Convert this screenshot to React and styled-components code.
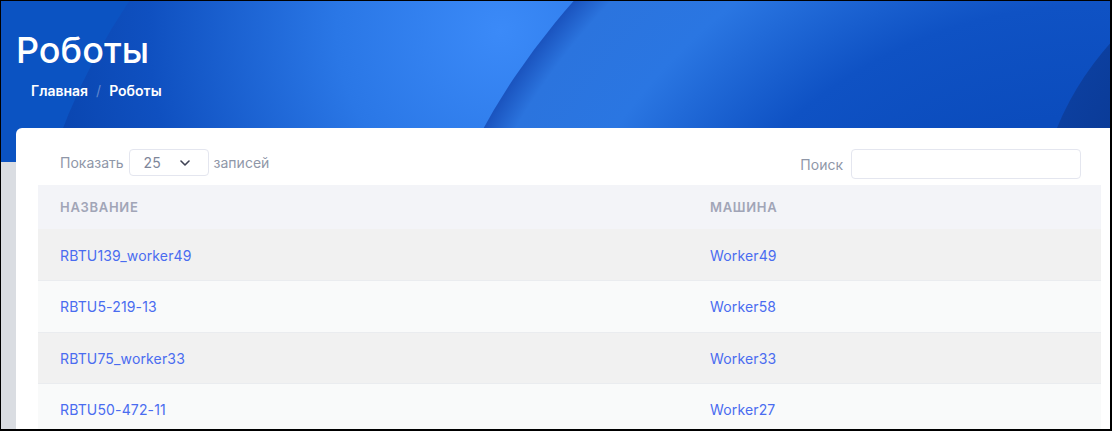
import React from 'react';
import styled, { createGlobalStyle } from 'styled-components';

const GlobalStyle = createGlobalStyle`
  html, body {
    margin: 0;
    padding: 0;
    background: #ffffff;
  }
  body {
    font-family: Inter, "Noto Sans", sans-serif;
    -webkit-font-smoothing: antialiased;
  }
  * {
    box-sizing: border-box;
  }
`;

const Frame = styled.div`
  width: 1112px;
  height: 431px;
  overflow: hidden;
  border-top: 1px solid #000;
  border-left: 1px solid #000;
  border-right: 2px solid #000;
  border-bottom: 2px solid #000;
  background: #dadde2;
  display: flex;
  flex-direction: column;
`;

const Hero = styled.header`
  position: relative;
  height: 161px;
  flex-shrink: 0;
  overflow: hidden;
  background: #0b53c2;
  padding: 28px 15px 0;
`;

const HeroArt = styled.svg`
  position: absolute;
  inset: 0;
  width: 100%;
  height: 100%;
`;

const HeroInner = styled.div`
  position: relative;
  display: flex;
  flex-direction: column;
  gap: 9px;
`;

const Title = styled.h1`
  margin: 0;
  font-size: 36px;
  line-height: 1.2;
  font-weight: 500;
  color: #ffffff;
`;

const Crumbs = styled.nav`
  display: flex;
  align-items: center;
  gap: 8px;
  padding-left: 15px;
  font-size: 14px;
  line-height: 20px;
  font-weight: 600;
  color: #ffffff;
`;

const CrumbSep = styled.span`
  color: rgba(255, 255, 255, 0.35);
  font-weight: 400;
`;

const Main = styled.main`
  margin-top: -34px;
  padding-left: 15px;
  position: relative;
`;

const Card = styled.section`
  background: #ffffff;
  border-radius: 6px 0 0 0;
  padding-top: 21px;
  min-height: 320px;
`;

const Toolbar = styled.div`
  display: flex;
  justify-content: space-between;
  align-items: flex-start;
  padding: 0 29px 0 44px;
  margin-bottom: 6px;
`;

const ToolGroup = styled.div`
  display: flex;
  align-items: center;
  height: ${p => p.$h}px;
  gap: ${p => p.$gap}px;
  font-size: 14px;
  color: #8f97a8;
`;

const Select = styled.div`
  width: 80px;
  height: 27px;
  border: 1px solid #e4e6ef;
  border-radius: 4px;
  display: flex;
  align-items: center;
  justify-content: space-between;
  padding: 0 18px 0 14px;
  font-size: 14px;
  color: #7e8699;
`;

const SearchInput = styled.input`
  width: 230px;
  height: 30px;
  border: 1px solid #e4e6ef;
  border-radius: 4px;
  outline: none;
  background: #ffffff;
`;

const Table = styled.table`
  margin-left: 22px;
  width: 1063px;
  border-collapse: collapse;
  font-size: 14px;
`;

const HeadCell = styled.th`
  height: 44px;
  padding: 0 22px;
  text-align: left;
  background: #f3f4f8;
  font-size: 13px;
  font-weight: 600;
  letter-spacing: 0.7px;
  text-transform: uppercase;
  color: #a1a5b7;
  width: ${p => p.$w || 'auto'};
`;

const Row = styled.tr`
  background: ${p => (p.$odd ? '#f1f1f1' : '#f9fafa')};
  border-bottom: 1px solid #eaecef;
`;

const Cell = styled.td`
  height: 51.5px;
  padding: 1px 22px 0;
  letter-spacing: 0.15px;
`;

const Link = styled.a`
  color: #4a6cf0;
  text-decoration: none;
`;

const Chevron = () => (
  <svg width="10" height="6" viewBox="0 0 10 6" fill="none">
    <path d="M1 1l4 4 4-4" stroke="#3f4254" strokeWidth="1.6" strokeLinecap="round" strokeLinejoin="round" />
  </svg>
);

const HeroBackground = () => (
  <HeroArt viewBox="0 0 1109 161" preserveAspectRatio="none">
    <defs>
      <radialGradient id="g1" gradientUnits="userSpaceOnUse" cx="500" cy="30" r="470">
        <stop offset="0" stopColor="#3b8af8" />
        <stop offset="0.35" stopColor="#2a77e6" />
        <stop offset="0.75" stopColor="#0f50c0" />
        <stop offset="1" stopColor="#0944ad" />
      </radialGradient>
      <radialGradient id="g2" gradientUnits="userSpaceOnUse" cx="1095" cy="466" r="700">
        <stop offset="0.5" stopColor="#0b4cbd" />
        <stop offset="0.66" stopColor="#0f52c4" />
        <stop offset="0.84" stopColor="#2a76e2" />
        <stop offset="0.96" stopColor="#2b74de" />
        <stop offset="1" stopColor="#1a53be" />
      </radialGradient>
      <radialGradient id="g3" gradientUnits="userSpaceOnUse" cx="1333" cy="242" r="300">
        <stop offset="0.7" stopColor="#093892" />
        <stop offset="1" stopColor="#0c3f9f" />
      </radialGradient>
    </defs>
    <rect x="0" y="0" width="1109" height="161" fill="#0b53c2" />
    <circle cx="668" cy="362" r="650" fill="url(#g1)" />
    <circle cx="1095" cy="466" r="700" fill="url(#g2)" />
    <circle cx="1333" cy="242" r="300" fill="url(#g3)" />
  </HeroArt>
);

const robots = [
  { name: 'RBTU139_worker49', machine: 'Worker49' },
  { name: 'RBTU5-219-13', machine: 'Worker58' },
  { name: 'RBTU75_worker33', machine: 'Worker33' },
  { name: 'RBTU50-472-11', machine: 'Worker27' },
];

export default function App() {
  return (
    <>
      <GlobalStyle />
      <Frame>
        <Hero>
          <HeroBackground />
          <HeroInner>
            <Title>Роботы</Title>
            <Crumbs>
              <span>Главная</span>
              <CrumbSep>/</CrumbSep>
              <span>Роботы</span>
            </Crumbs>
          </HeroInner>
        </Hero>

        <Main>
          <Card>
            <Toolbar>
              <ToolGroup $h={27} $gap={5}>
                <span>Показать</span>
                <Select>
                  <span>25</span>
                  <Chevron />
                </Select>
                <span>записей</span>
              </ToolGroup>
              <ToolGroup $h={30} $gap={8}>
                <span>Поиск</span>
                <SearchInput type="text" />
              </ToolGroup>
            </Toolbar>

            <Table>
              <thead>
                <tr>
                  <HeadCell $w="650px">Название</HeadCell>
                  <HeadCell>Машина</HeadCell>
                </tr>
              </thead>
              <tbody>
                {robots.map((r, i) => (
                  <Row key={r.name} $odd={i % 2 === 0}>
                    <Cell><Link href="#">{r.name}</Link></Cell>
                    <Cell><Link href="#">{r.machine}</Link></Cell>
                  </Row>
                ))}
              </tbody>
            </Table>
          </Card>
        </Main>
      </Frame>
    </>
  );
}
